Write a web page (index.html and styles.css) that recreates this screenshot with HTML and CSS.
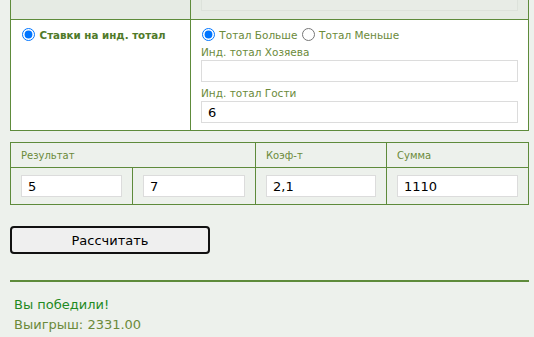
FILE: index.html
```html
<!DOCTYPE html>
<html lang="ru">
<head>
  <meta charset="UTF-8">
  <meta name="viewport" content="width=device-width, initial-scale=1.0">
  <title>Калькулятор ставок</title>
  <link rel="stylesheet" href="styles.css">
</head>
<body>
  <div class="page">
    <!-- Bet types -->
    <table class="bet-table">
      <colgroup>
        <col class="bet-col-left">
        <col>
      </colgroup>
      <tr class="row-disabled">
        <td></td>
        <td><div class="input-stub"></div></td>
      </tr>
      <tr>
        <td class="bet-type">
          <label><input type="radio" name="bet" checked> Ставки на инд. тотал</label>
        </td>
        <td class="bet-options">
          <div class="radio-line">
            <label><input type="radio" name="total" checked> Тотал Больше</label>
            <label><input type="radio" name="total"> Тотал Меньше</label>
          </div>
          <div class="field-label">Инд. тотал Хозяева</div>
          <input type="text" class="text-input" value="">
          <div class="field-label">Инд. тотал Гости</div>
          <input type="text" class="text-input" value="6">
        </td>
      </tr>
    </table>

    <!-- Result -->
    <table class="result-table">
      <colgroup>
        <col class="c1">
        <col class="c2">
        <col class="c3">
        <col>
      </colgroup>
      <tr class="head-row">
        <td colspan="2">Результат</td>
        <td>Коэф-т</td>
        <td>Сумма</td>
      </tr>
      <tr class="data-row">
        <td><input type="text" class="text-input" value="5"></td>
        <td><input type="text" class="text-input" value="7"></td>
        <td><input type="text" class="text-input" value="2,1"></td>
        <td><input type="text" class="text-input" value="1110"></td>
      </tr>
    </table>

    <button class="calc-button">Рассчитать</button>

    <hr class="divider">

    <div class="result-win">Вы победили!</div>
    <div class="result-sum">Выигрыш: 2331.00</div>
  </div>
</body>
</html>
```

FILE: styles.css
```css
body {
  margin: 0;
  background-color: #edf1ec;
  font-family: "DejaVu Sans", Verdana, sans-serif;
  font-size: 10.5px;
  color: #6b8a3a;
}

.page {
  padding: 0 5px 0 10px;
}

/* Bet table */
.bet-table,
.result-table {
  width: 100%;
  border-collapse: collapse;
  table-layout: fixed;
}

.bet-table td,
.result-table td {
  border: 1px solid #5e8b3b;
  vertical-align: top;
}

.bet-table tr:first-child td {
  border-top: none;
}

.bet-col-left {
  width: 180px;
}

.row-disabled td {
  background-color: #e6ebe4;
  height: 19px;
  padding: 0 10px;
}

.input-stub {
  height: 10px;
  border: 1px solid #dde2db;
  border-top: none;
  background-color: #e8ece6;
}

.bet-type,
.bet-options {
  background-color: #fff;
}

.bet-type {
  padding: 8px 10px;
  font-size: 10.3px;
  font-weight: bold;
  color: #4f7a2a;
}

.bet-type input,
.radio-line input {
  width: 13px;
  height: 13px;
  margin: 0 1px 0 1px;
  vertical-align: -2px;
}

.bet-options {
  padding: 8px 10px 7px;
}

.radio-line {
  margin-bottom: 5px;
}

.field-label {
  margin-bottom: 2px;
}

.text-input {
  display: block;
  box-sizing: border-box;
  width: 100%;
  height: 22px;
  padding: 1px 6px;
  margin: 0 0 5px;
  border: 1px solid #dcdcdc;
  font-family: "DejaVu Sans", Verdana, sans-serif;
  font-size: 13px;
  color: #000;
  background-color: #fff;
}

.bet-options .text-input:last-child {
  margin-bottom: 0;
}

/* Result table */
.result-table {
  margin-top: 11px;
}

.c1 {
  width: 122px;
}

.c2 {
  width: 123px;
}

.c3 {
  width: 131px;
}

.head-row td {
  height: 24px;
  padding: 0 10px;
  font-size: 10px;
  vertical-align: middle;
}

.data-row td {
  padding: 7px 10px 7px;
}

.data-row .text-input {
  margin: 0;
}

/* Button and result */
.calc-button {
  display: block;
  width: 200px;
  height: 28px;
  margin-top: 21px;
  border: 2px solid #111;
  border-radius: 4px;
  background-color: #efefef;
  font-family: "DejaVu Sans", Verdana, sans-serif;
  font-size: 13px;
  color: #000;
}

.divider {
  margin: 26px 0 0;
  border: none;
  border-top: 2px solid #5e8b3b;
}

.result-win {
  margin-top: 15px;
  padding-left: 4px;
  font-size: 13px;
  color: #1f8a1f;
}

.result-sum {
  margin-top: 5px;
  padding-left: 4px;
  font-size: 13px;
  color: #6b8a3a;
}
```
